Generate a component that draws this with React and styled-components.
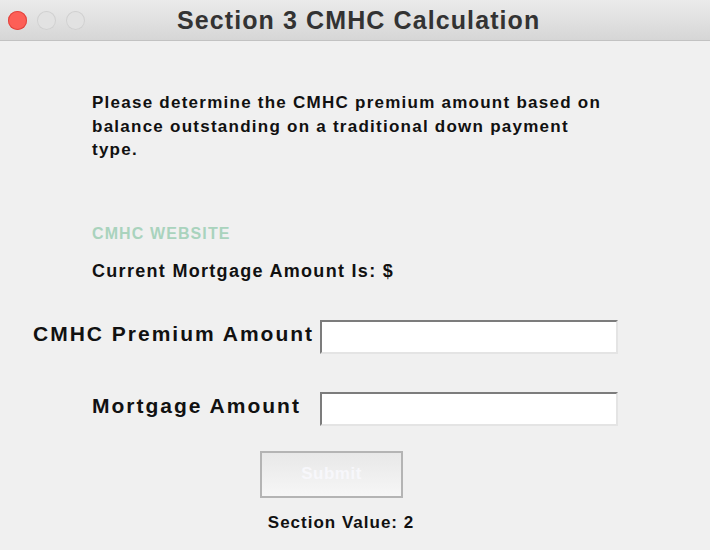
import React from 'react'
import styled, { createGlobalStyle } from 'styled-components'

const GlobalStyle = createGlobalStyle`
    html, body {
        margin: 0;
        padding: 0;
        background: #f0f0f0;
    }
    body {
        font-family: "Liberation Sans", Arial, sans-serif;
    }
`

function App() {
    return (
        <WindowStyled>
            <GlobalStyle />
            <TitleBar>
                <Lights>
                    <Light color="#fd5f57" edge="#e0443e" />
                    <Light color="#e2e2e2" edge="#d0d0d0" />
                    <Light color="#e2e2e2" edge="#d0d0d0" />
                </Lights>
                <Title>Section 3 CMHC Calculation</Title>
            </TitleBar>
            <Body>
                <Intro>
                    Please determine the CMHC premium amount based on<br />
                    balance outstanding on a traditional down payment<br />
                    type.
                </Intro>
                <WebsiteLink>CMHC WEBSITE</WebsiteLink>
                <Current>Current Mortgage Amount Is: $</Current>
                <FieldRow indent={33} top={38}>
                    <Label>CMHC Premium Amount</Label>
                    <Input />
                </FieldRow>
                <FieldRow indent={92} top={38}>
                    <Label>Mortgage Amount</Label>
                    <Input />
                </FieldRow>
                <Actions>
                    <SubmitButton disabled>Submit</SubmitButton>
                    <SectionValue>Section Value: 2</SectionValue>
                </Actions>
            </Body>
        </WindowStyled>
    )
}

const WindowStyled = styled.div`
    width: 710px;
    height: 550px;
    background: #f0f0f0;
    overflow: hidden;
`

const TitleBar = styled.div`
    height: 40px;
    display: flex;
    align-items: center;
    background: linear-gradient(#ebebeb, #d6d6d6);
    border-bottom: 1px solid #c2c2c2;
`

const Lights = styled.div`
    display: flex;
    gap: 10px;
    padding-left: 8px;
`

const Light = styled.span`
    width: 19px;
    height: 19px;
    border-radius: 50%;
    background: ${p => p.color};
    box-shadow: inset 0 0 0 1px ${p => p.edge};
`

const Title = styled.div`
    flex: 1;
    padding-left: 92px;
    font-size: 25px;
    font-weight: 700;
    letter-spacing: 1.1px;
    color: #333;
`

const Body = styled.div`
    display: flex;
    flex-direction: column;
    padding-top: 50px;
`

const Intro = styled.p`
    margin: 0 0 0 92px;
    font-size: 17px;
    line-height: 23.5px;
    font-weight: 700;
    letter-spacing: 1.25px;
    color: #111;
`

const WebsiteLink = styled.div`
    margin: 63px 0 0 92px;
    font-size: 16px;
    font-weight: 700;
    letter-spacing: 1.1px;
    color: #a9d3bd;
`

const Current = styled.div`
    margin: 18px 0 0 92px;
    font-size: 18px;
    font-weight: 700;
    letter-spacing: 1.3px;
    color: #111;
`

const FieldRow = styled.div`
    display: grid;
    grid-template-columns: 320px 298px;
    align-items: center;
    margin-top: ${p => p.top}px;

    label {
        padding-left: ${p => p.indent}px;
    }
`

const Label = styled.label`
    padding-bottom: 6px;
    font-size: 21px;
    font-weight: 700;
    letter-spacing: 2px;
    white-space: nowrap;
    color: #111;
`

const Input = styled.input`
    box-sizing: border-box;
    width: 298px;
    height: 34px;
    background: #fff;
    border-style: solid;
    border-width: 2px;
    border-color: #7c7c7c #e4e4e4 #e4e4e4 #7c7c7c;
    outline: none;
`

const Actions = styled.div`
    display: flex;
    flex-direction: column;
    align-items: center;
    margin-top: 25px;
`

const SubmitButton = styled.button`
    box-sizing: border-box;
    width: 143px;
    height: 47px;
    margin-right: 47px;
    border: 2px solid #b4b4b4;
    background: linear-gradient(#e8e8e8, #f6f6f6);
    color: #f7f7fb;
    font-family: inherit;
    font-size: 17px;
    font-weight: 700;
    letter-spacing: 0.5px;
`

const SectionValue = styled.div`
    margin-top: 15px;
    margin-right: 28px;
    font-size: 17px;
    font-weight: 700;
    letter-spacing: 1px;
    color: #111;
`

export default App
